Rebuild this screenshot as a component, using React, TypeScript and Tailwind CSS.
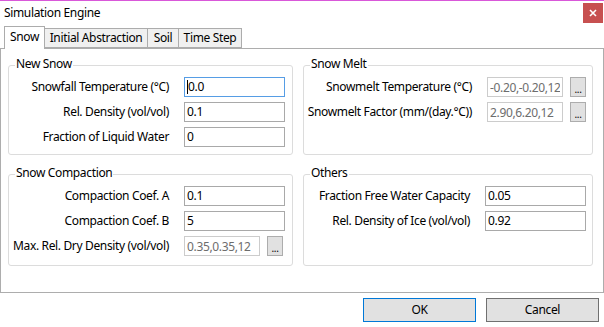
import React from 'react'

type Row = {
  label: string
  value: string
  kind?: 'text' | 'focus' | 'table'
}

function Field({ row }: { row: Row }) {
  if (row.kind === 'table') {
    return (
      <div className="flex items-center">
        <input
          readOnly
          disabled
          defaultValue={row.value}
          className="w-[76px] h-[20px] border border-[#cccccc] bg-white px-[2px] text-[12px] text-[#6d6d6d] outline-none"
        />
        <button className="ml-[7px] w-[16px] h-[20px] border border-[#adadad] bg-[#e1e1e1] text-[10px] leading-[22px] text-black">
          ...
        </button>
      </div>
    )
  }
  const focus = row.kind === 'focus'
  return (
    <div
      className={`flex items-center w-[101px] h-[20px] border ${
        focus ? 'border-[#569de5]' : 'border-[#a9a9a9]'
      } bg-white px-[2px]`}
    >
      {focus && <span className="w-px h-[14px] bg-black" />}
      <span className="text-[12px] text-black">{row.value}</span>
    </div>
  )
}

function GroupBox({ title, rows, labelW }: { title: string; rows: Row[]; labelW: string }) {
  return (
    <div className="border border-[#dcdcdc] rounded-[3px] h-full">
      <div className="-mt-[10px] ml-[6px] px-[1px] w-fit bg-white leading-[16px]">{title}</div>
      <div className="flex flex-col gap-[5px] mt-[5px]">
        {rows.map((r) => (
          <div key={r.label} className="flex items-center">
            <div className={`${labelW} text-right whitespace-nowrap pr-[15px]`}>{r.label}</div>
            <Field row={r} />
          </div>
        ))}
      </div>
    </div>
  )
}

export default function App() {
  const tabs = [
    { name: 'Initial Abstraction', w: 'w-[104px]' },
    { name: 'Soil', w: 'w-[32px]' },
    { name: 'Time Step', w: 'w-[64px]' },
  ]

  return (
    <div
      className="w-[604px] h-[327px] bg-white text-[12px] tracking-[-0.35px] text-black flex flex-col overflow-hidden"
      style={{ fontFamily: '"Segoe UI", "Noto Sans", sans-serif' }}
    >
      <div className="h-px bg-[#d958d9]" />
      <div className="h-[25px] flex items-start justify-between">
        <div className="pl-[4px] pt-[4px] leading-[16px]">Simulation Engine</div>
        <div className="mt-[2px] mr-px w-[20px] h-[20px] bg-[#c75050] flex items-center justify-center">
          <svg width="8" height="8" viewBox="0 0 8 8">
            <path d="M1 1 L7 7 M7 1 L1 7" stroke="white" strokeWidth="1.6" />
          </svg>
        </div>
      </div>

      <div className="flex items-end pl-[4px] h-[22px]">
        <div className="relative z-10 -mb-px w-[41px] h-[23px] border border-b-0 border-[#acacac] bg-white flex items-center justify-center pb-[2px]">
          Snow
        </div>
        {tabs.map((t) => (
          <div
            key={t.name}
            className={`${t.w} -ml-px h-[20px] border border-[#acacac] bg-[#f0f0f0] flex items-center justify-center first:ml-0`}
          >
            {t.name}
          </div>
        ))}
      </div>

      <div className="h-[245px] border border-[#adadad] bg-white grid grid-cols-[285px_290px] grid-rows-[90px_92px] gap-x-[10px] gap-y-[19px] pl-[7px] pt-[16px]">
        <GroupBox
          title="New Snow"
          labelW="w-[175px]"
          rows={[
            { label: 'Snowfall Temperature (°C)', value: '0.0', kind: 'focus' },
            { label: 'Rel. Density (vol/vol)', value: '0.1' },
            { label: 'Fraction of Liquid Water', value: '0' },
          ]}
        />
        <GroupBox
          title="Snow Melt"
          labelW="w-[183px]"
          rows={[
            { label: 'Snowmelt Temperature (°C)', value: '-0.20,-0.20,12', kind: 'table' },
            { label: 'Snowmelt Factor (mm/(day.°C))', value: '2.90,6.20,12', kind: 'table' },
          ]}
        />
        <GroupBox
          title="Snow Compaction"
          labelW="w-[175px]"
          rows={[
            { label: 'Compaction Coef. A', value: '0.1' },
            { label: 'Compaction Coef. B', value: '5' },
            { label: 'Max. Rel. Dry Density (vol/vol)', value: '0.35,0.35,12', kind: 'table' },
          ]}
        />
        <GroupBox
          title="Others"
          labelW="w-[181px]"
          rows={[
            { label: 'Fraction Free Water Capacity', value: '0.05' },
            { label: 'Rel. Density of Ice (vol/vol)', value: '0.92' },
          ]}
        />
      </div>

      <div className="flex justify-end gap-[10px] pr-[5px] pt-[5px]">
        <button className="w-[113px] h-[24px] border border-[#0078d7] bg-[#e1e1e1]">OK</button>
        <button className="w-[113px] h-[24px] border border-[#707070] bg-[#e1e1e1]">Cancel</button>
      </div>
    </div>
  )
}
